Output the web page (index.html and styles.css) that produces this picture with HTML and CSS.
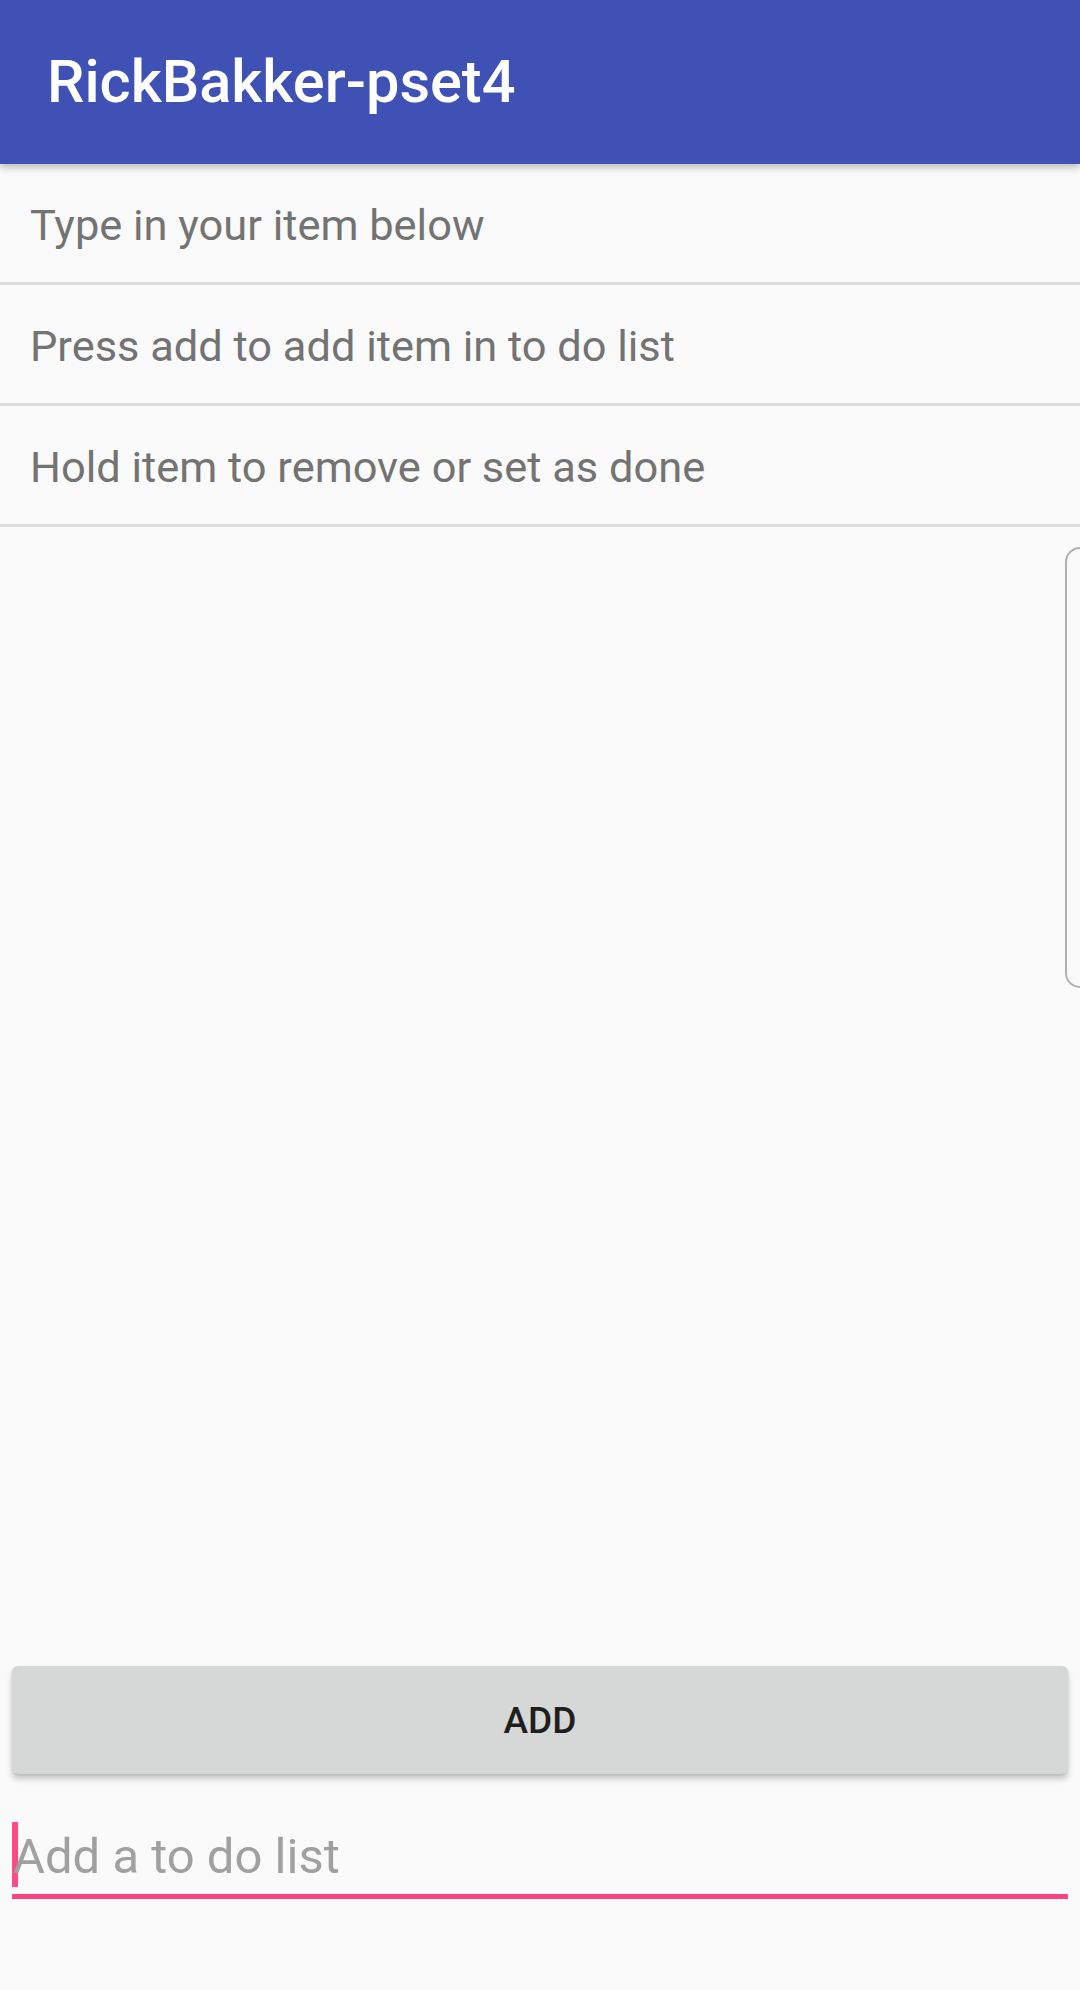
FILE: index.html
```html
<!DOCTYPE html>
<html lang="en">
<head>
<meta charset="utf-8">
<title>RickBakker-pset4</title>
<link rel="stylesheet" href="styles.css">
</head>
<body>
<div class="screen">
  <header class="appbar">
    <h1 class="appbar-title">RickBakker-pset4</h1>
  </header>
  <ul class="list">
    <li class="list-row">Type in your item below</li>
    <li class="list-row">Press add to add item in to do list</li>
    <li class="list-row">Hold item to remove or set as done</li>
  </ul>
  <div class="edge-panel"></div>
  <button class="add-btn" type="button">ADD</button>
  <div class="field">
    <span class="cursor"></span>
    <span class="hint">Add a to do list</span>
  </div>
</div>
</body>
</html>
```

FILE: styles.css
```css
html, body {
  margin: 0;
  padding: 0;
  background: #fafafa;
}

.screen {
  position: relative;
  width: 1080px;
  height: 1990px;
  display: flex;
  flex-direction: column;
  font-family: Roboto, "Noto Sans", "Liberation Sans", sans-serif;
  overflow: hidden;
}

.appbar {
  position: relative;
  z-index: 2;
  height: 164px;
  flex: 0 0 164px;
  background: #3f51b5;
  display: flex;
  align-items: center;
  padding-left: 47px;
  box-shadow: 0 3px 8px rgba(0, 0, 0, 0.28);
}

.appbar-title {
  margin: 0;
  color: #ffffff;
  font-size: 59.5px;
  font-weight: 500;
  line-height: 1;
  padding-top: 2px;
}

.list {
  list-style: none;
  margin: 0;
  padding: 0;
}

.list-row {
  box-sizing: content-box;
  border-bottom: 3px solid #dcdcdc;
  display: flex;
  align-items: center;
  padding: 4px 0 0 30px;
  height: 114px;
  font-size: 43.4px;
  color: #737373;
}

.edge-panel {
  position: absolute;
  left: 1065px;
  top: 547px;
  width: 60px;
  height: 437px;
  border: 2px solid #b0b0b0;
  border-radius: 15px;
}

.add-btn {
  margin: auto 12px 0 12px;
  height: 108px;
  flex: 0 0 108px;
  border: none;
  border-radius: 6px;
  background: #d6d7d7;
  box-shadow: 0 5px 6px rgba(0, 0, 0, 0.22), 0 1px 2px rgba(0, 0, 0, 0.08);
  font-family: Roboto, "Noto Sans", sans-serif;
  font-size: 37px;
  font-weight: 500;
  color: #1e1e1e;
  padding: 0;
}

.field {
  position: relative;
  margin: 49px 12px 91px 12px;
  height: 65px;
  line-height: 65px;
  padding-bottom: 6px;
  border-bottom: 5px solid #ff4081;
  font-size: 49px;
  color: #a0a0a0;
}

.hint {
  display: block;
  padding-left: 1px;
  position: relative;
  top: 1px;
}

.cursor {
  position: absolute;
  left: 0;
  top: -1px;
  width: 6px;
  height: 65px;
  background: #ff4081;
  opacity: 0.95;
}
```
